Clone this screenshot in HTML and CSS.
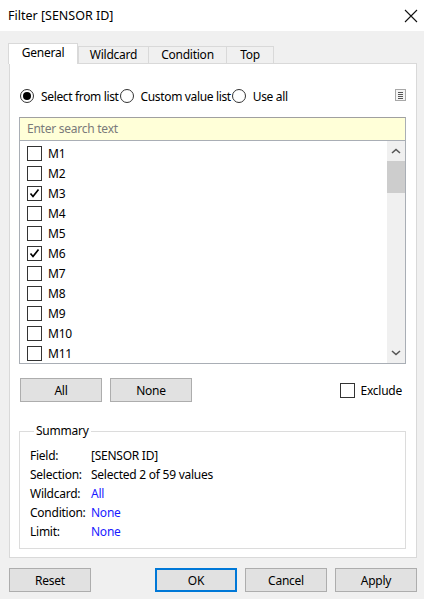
FILE: index.html
```html
<!DOCTYPE html>
<html>
<head>
<meta charset="utf-8">
<link rel="stylesheet" href="styles.css">
</head>
<body>
<div class="window">
  <div class="titlebar">
    <span class="title">Filter [SENSOR ID]</span>
    <svg class="close" width="14" height="14" viewBox="0 0 14 14"><path d="M1 1L13 13M13 1L1 13" stroke="#111" stroke-width="1.1" fill="none"/></svg>
  </div>
  <div class="body">
    <div class="tabs">
      <div class="tab active t1">General</div>
      <div class="tab t2">Wildcard</div>
      <div class="tab t3">Condition</div>
      <div class="tab t4">Top</div>
    </div>
    <div class="panel">
      <div class="radios">
        <label class="radio"><span class="rbtn on"></span>Select from list</label>
        <label class="radio"><span class="rbtn"></span>Custom value list</label>
        <label class="radio"><span class="rbtn"></span>Use all</label>
        <span class="spacer"></span>
        <svg class="menuicon" width="11" height="12" viewBox="0 0 11 12"><rect x="0.5" y="0.5" width="10" height="11" fill="#f4f4f4" stroke="#a8a8a8"/><path d="M3 3.5H8M3 5.5H8M3 7.5H8M3 9.5H8" stroke="#555" stroke-width="1"/></svg>
      </div>
      <div class="listbox">
        <div class="search">Enter search text</div>
        <div class="listarea">
          <div class="items">
            <div class="item"><span class="cb"></span>M1</div>
            <div class="item"><span class="cb"></span>M2</div>
            <div class="item"><span class="cb"><svg width="13" height="13" viewBox="0 0 13 13"><path d="M2.5 6.5L5 9.5L10.5 2.5" stroke="#000" stroke-width="1.7" fill="none"/></svg></span>M3</div>
            <div class="item"><span class="cb"></span>M4</div>
            <div class="item"><span class="cb"></span>M5</div>
            <div class="item"><span class="cb"><svg width="13" height="13" viewBox="0 0 13 13"><path d="M2.5 6.5L5 9.5L10.5 2.5" stroke="#000" stroke-width="1.7" fill="none"/></svg></span>M6</div>
            <div class="item"><span class="cb"></span>M7</div>
            <div class="item"><span class="cb"></span>M8</div>
            <div class="item"><span class="cb"></span>M9</div>
            <div class="item"><span class="cb"></span>M10</div>
            <div class="item"><span class="cb"></span>M11</div>
          </div>
          <div class="scrollbar">
            <div class="arrow"><svg width="10" height="6" viewBox="0 0 10 6"><path d="M1 5L5 1.5L9 5" stroke="#555" stroke-width="1.6" fill="none"/></svg></div>
            <div class="thumb"></div>
            <div class="track"></div>
            <div class="arrow"><svg width="10" height="6" viewBox="0 0 10 6"><path d="M1 1L5 4.5L9 1" stroke="#555" stroke-width="1.6" fill="none"/></svg></div>
          </div>
        </div>
      </div>
      <div class="actions">
        <button class="btn">All</button>
        <button class="btn">None</button>
        <span class="spacer"></span>
        <label class="exclude"><span class="cb"></span>Exclude</label>
      </div>
      <fieldset class="summary">
        <legend>Summary</legend>
        <div class="srow"><span class="k">Field:</span><span>[SENSOR ID]</span></div>
        <div class="srow"><span class="k">Selection:</span><span>Selected 2 of 59 values</span></div>
        <div class="srow"><span class="k">Wildcard:</span><span class="link">All</span></div>
        <div class="srow"><span class="k">Condition:</span><span class="link">None</span></div>
        <div class="srow"><span class="k">Limit:</span><span class="link">None</span></div>
      </fieldset>
    </div>
    <div class="footer">
      <button class="btn">Reset</button>
      <span class="spacer"></span>
      <button class="btn default">OK</button>
      <button class="btn">Cancel</button>
      <button class="btn">Apply</button>
    </div>
  </div>
</div>
</body>
</html>
```
FILE: styles.css
```css
* { box-sizing: border-box; }
html, body { margin: 0; padding: 0; }
body {
  width: 424px;
  height: 599px;
  background: #f0f0f0;
  font-family: "Noto Sans", "Open Sans", sans-serif;
  font-size: 12px;
  letter-spacing: -0.25px;
  color: #000;
  overflow: hidden;
}
.window { width: 424px; height: 599px; display: flex; flex-direction: column; }
.titlebar {
  height: 31px;
  background: #fff;
  display: flex;
  align-items: center;
  padding: 0 6px 0 8px;
}
.title { font-size: 12.5px; letter-spacing: 0; flex: 1; }
.body { flex: 1; padding: 12px 7px 0 9px; display: flex; flex-direction: column; }
.tabs { display: flex; align-items: flex-end; height: 20px; position: relative; z-index: 1; margin-left: -1px; }
.tab {
  height: 17px;
  border: 1px solid #d9d9d9;
  border-bottom: none;
  background: #f0f0f0;
  line-height: 15px;
  text-align: center;
  margin-left: -1px;
}
.tab.active {
  height: 21px;
  background: #fff;
  margin-left: 0;
  margin-bottom: -1px;
  line-height: 18px;
}
.t1 { width: 70px; }
.t2 { width: 71px; margin-left: 0; }
.t3 { width: 79px; }
.t4 { width: 48px; }
.panel {
  height: 495px;
  border: 1px solid #d9d9d9;
  background: #fff;
  padding: 0 10px 0 9px;
  display: flex;
  flex-direction: column;
}
.radios { display: flex; align-items: center; height: 20px; margin-top: 22px; letter-spacing: -0.35px; }
.radio { display: flex; align-items: center; margin-right: 0; }
.rbtn {
  width: 14px; height: 14px;
  border: 1px solid #333;
  border-radius: 50%;
  margin-right: 7px;
  margin-left: 1px;
  display: inline-flex; align-items: center; justify-content: center;
}
.rbtn.on::after { content: ""; width: 8px; height: 8px; border-radius: 50%; background: #000; }
.spacer { flex: 1; }
.menuicon { margin-top: -2px; }
.listbox { margin-top: 11px; border: 1px solid #a9aeb5; border-top-color: #a0a0a0; }
.search {
  height: 23px;
  background: #ffffd8;
  border-bottom: 1px solid #a9aeb5;
  color: #7a7a7a;
  padding-left: 7px;
  line-height: 22px;
}
.listarea { display: flex; height: 222px; }
.items { flex: 1; padding-top: 2px; }
.item { height: 20px; display: flex; align-items: center; padding-left: 7px; }
.cb {
  width: 15px; height: 15px;
  border: 1px solid #333;
  margin-right: 6px;
  display: inline-flex; align-items: center; justify-content: center;
  background: #fff;
}
.scrollbar { width: 18px; background: #f0f0f0; display: flex; flex-direction: column; }
.arrow { height: 20px; display: flex; align-items: center; justify-content: center; }
.thumb { height: 32px; background: #cdcdcd; }
.track { flex: 1; }
.actions { display: flex; align-items: center; margin-top: 14px; height: 24px; }
.btn {
  width: 82px; height: 24px;
  border: 1px solid #adadad;
  background: #e1e1e1;
  font: inherit;
  letter-spacing: inherit;
  color: #000;
  padding: 0;
  margin: 0 8px 0 0;
}
.actions .btn:first-child { margin-left: 1px; }
.exclude { display: flex; align-items: center; margin-right: 4px; }
.exclude .cb { margin-right: 6px; }
.summary {
  margin: 22px 0 0 0;
  border: 1px solid #dcdcdc;
  padding: 8px 0 0 10px;
  height: 125px;
}
.summary legend { padding: 0 2px; margin-left: 4px; line-height: 14px; }
.srow { display: flex; height: 19px; align-items: center; }
.k { width: 61px; }
.link { color: #1a1aff; }
.footer { display: flex; margin-top: 10px; height: 24px; }
.footer .btn { margin: 0; }
.footer .btn + .btn { margin-left: 8px; }
.btn.default { border: 2px solid #0078d7; }
```
